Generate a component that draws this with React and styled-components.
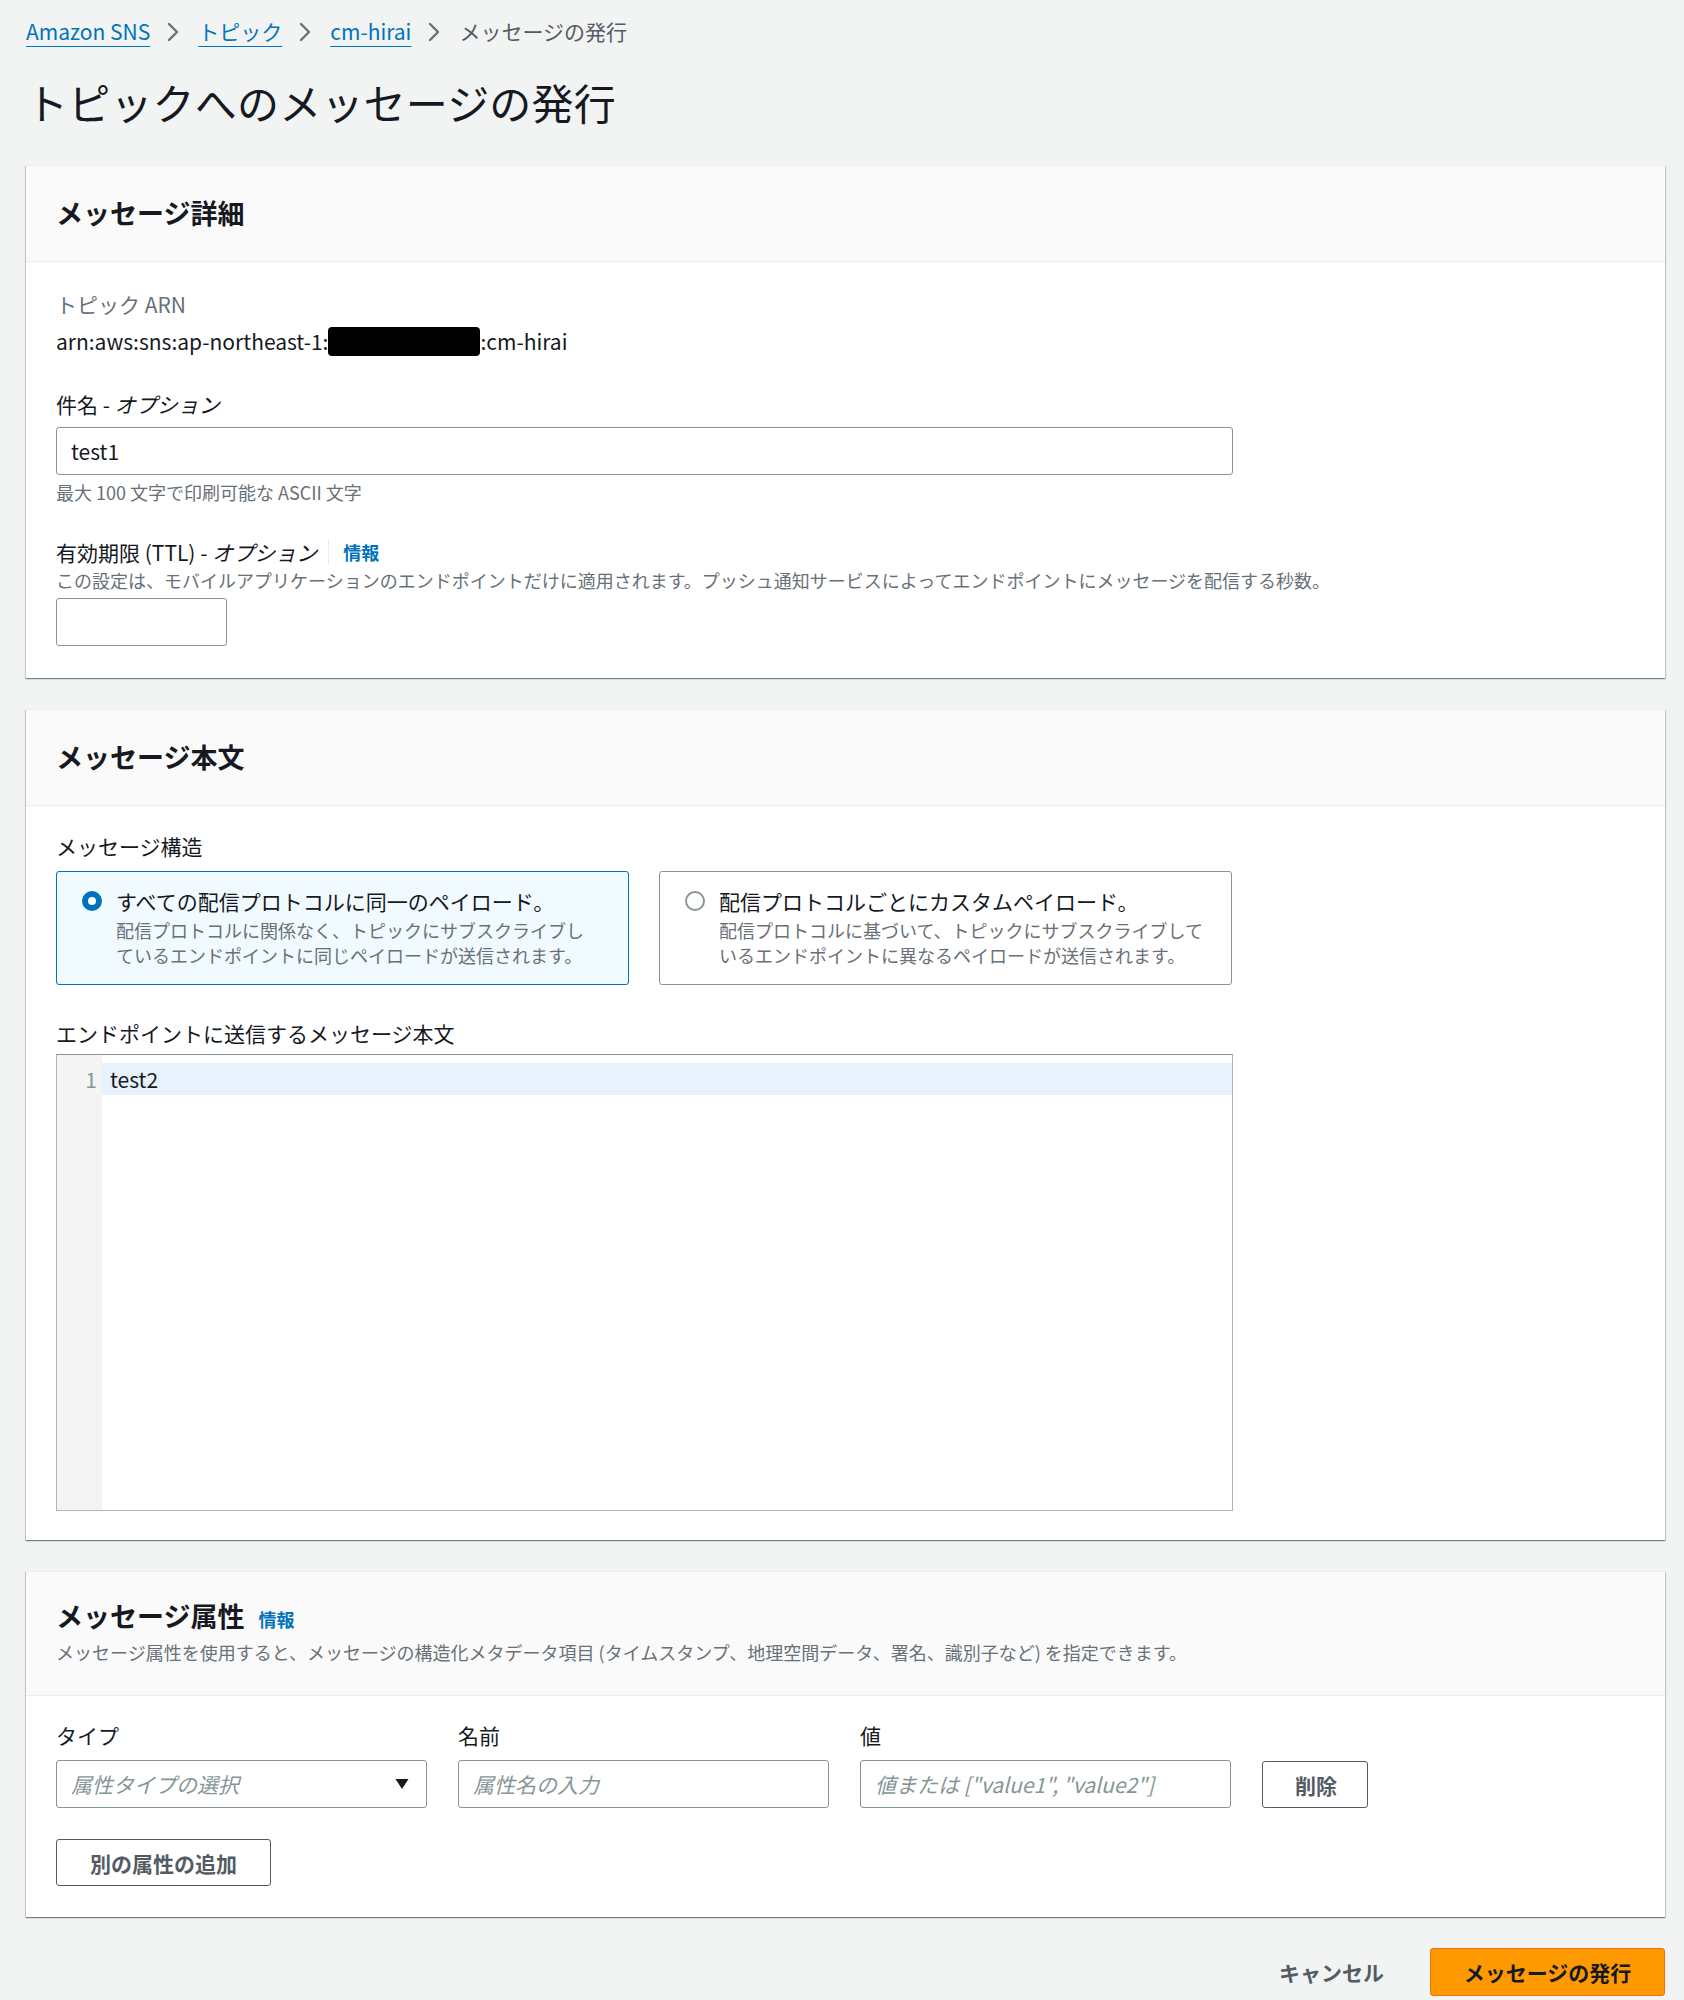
import React from 'react';
import styled, { createGlobalStyle } from 'styled-components';

const GlobalStyle = createGlobalStyle`
  html, body { margin: 0; padding: 0; background: #f2f3f3; }
  body {
    font-family: "Noto Sans CJK JP", "Noto Sans", sans-serif;
    color: #16191f;
    -webkit-font-smoothing: antialiased;
  }
  * { box-sizing: border-box; }
`;

const Page = styled.div`
  padding: 15px 19px 0 26px;
  min-height: 2000px;
`;

const Crumbs = styled.nav`
  display: flex;
  align-items: center;
  height: 33px;
  font-size: 21px;
  line-height: 33px;
`;

const CrumbLink = styled.a`
  color: #0073bb;
  text-decoration: underline;
  text-decoration-thickness: 1px;
  text-underline-offset: 6px;
  cursor: pointer;
`;

const CrumbCurrent = styled.span`
  color: #545b64;
`;

const CrumbSep = styled.svg`
  width: 12px;
  height: 20px;
  margin: 0 19px 0 17px;
  flex: none;
`;

const Title = styled.h1`
  margin: 29px 0 38px;
  font-size: 42px;
  line-height: 50px;
  font-weight: 400;
  color: #16191f;
  letter-spacing: 0.2px;
`;

const Card = styled.section`
  background: #fff;
  border-top: 1px solid #eaeded;
  box-shadow: 0 1px 1px 0 rgba(0, 28, 36, 0.35), 1px 1px 1px 0 rgba(0, 28, 36, 0.15),
    -1px 1px 1px 0 rgba(0, 28, 36, 0.15);
  margin-bottom: 31px;
`;

const CardHeader = styled.header`
  background: #fafafa;
  border-bottom: 1px solid #eaeded;
  padding: ${(p) => (p.$withDesc ? '26px 30px 31px' : '29px 30px 30px')};
`;

const HeadingRow = styled.div`
  display: flex;
  align-items: baseline;
  gap: 14px;
`;

const Heading = styled.h2`
  margin: 0;
  font-size: 27px;
  line-height: 36px;
  font-weight: 700;
`;

const HeaderDesc = styled.p`
  margin: 6px 0 0;
  font-size: 18px;
  line-height: 24px;
  color: #687078;
`;

const CardBody = styled.div`
  padding: ${(p) => p.$pad || '26px 30px 31px'};
`;

const Stack = styled.div`
  display: flex;
  flex-direction: column;
  gap: ${(p) => p.$gap || 33}px;
`;

const Field = styled.div`
  display: flex;
  flex-direction: column;
  align-items: flex-start;
`;

const Label = styled.div`
  display: flex;
  align-items: center;
  font-size: 21px;
  line-height: 30px;
  color: ${(p) => (p.$muted ? '#687078' : '#16191f')};
  margin-bottom: ${(p) => p.$mb ?? 8}px;
  em { font-style: italic; }
`;

const InfoLink = styled.a`
  color: #0073bb;
  font-weight: 700;
  font-size: 18px;
  cursor: pointer;
`;

const Divider = styled.span`
  display: inline-block;
  width: 1px;
  height: 26px;
  background: #eaeded;
  margin: 0 14px 0 11px;
`;

const Value = styled.div`
  font-size: 21px;
  line-height: 30px;
  display: flex;
  align-items: center;
`;

const Redacted = styled.span`
  display: inline-block;
  width: 152px;
  height: 29px;
  background: #000;
  border-radius: 4px;
`;

const Hint = styled.div`
  font-size: 18px;
  line-height: 24px;
  color: #687078;
  white-space: nowrap;
  margin: ${(p) => p.$m || '0'};
`;

const TextInput = styled.input`
  display: block;
  width: ${(p) => p.$w || '100%'};
  height: 48px;
  border: 1px solid #879596;
  border-radius: 3px;
  padding: 0 14px;
  font-family: inherit;
  font-size: 21px;
  color: #16191f;
  background: #fff;
  outline: none;
  &::placeholder {
    color: #879596;
    font-style: italic;
  }
`;

const Tiles = styled.div`
  display: grid;
  grid-template-columns: 573px 573px;
  column-gap: 30px;
`;

const Tile = styled.label`
  display: flex;
  align-items: flex-start;
  gap: 14px;
  height: 114px;
  padding: 14px 20px 0 25px;
  border: 1px solid ${(p) => (p.$checked ? '#0073bb' : '#879596')};
  border-radius: 3px;
  background: ${(p) => (p.$checked ? '#f1faff' : '#fff')};
`;

const RadioDot = styled.span`
  flex: none;
  width: 20px;
  height: 20px;
  margin-top: 5px;
  border-radius: 50%;
  background: #fff;
  border: ${(p) => (p.$checked ? '6px solid #0073bb' : '2px solid #879596')};
`;

const TileText = styled.div`
  display: flex;
  flex-direction: column;
`;

const TileTitle = styled.div`
  font-size: 21px;
  line-height: 30px;
  margin-bottom: 2px;
`;

const TileDesc = styled.div`
  font-size: 18px;
  line-height: 25px;
  color: #687078;
`;

const Editor = styled.div`
  display: flex;
  width: 1177px;
  height: 457px;
  border: 1px solid #aab7b8;
  border-top-color: #879596;
  background: #fff;
`;

const Gutter = styled.div`
  width: 45px;
  flex: none;
  background: #f4f4f4;
  padding-top: 8px;
  text-align: right;
  padding-right: 5px;
  font-size: 21px;
  line-height: 32px;
  color: #879596;
`;

const Lines = styled.div`
  flex: 1;
  padding-top: 8px;
`;

const ActiveLine = styled.div`
  height: 32px;
  line-height: 32px;
  background: #e8f2fd;
  padding-left: 8px;
  font-size: 21px;
  color: #16191f;
`;

const AttrGrid = styled.div`
  display: grid;
  grid-template-columns: 371px 371px 371px 106px;
  column-gap: 31px;
  align-items: end;
`;

const SelectBox = styled.div`
  display: flex;
  align-items: center;
  justify-content: space-between;
  width: 100%;
  height: 48px;
  border: 1px solid #879596;
  border-radius: 3px;
  padding: 0 17px 0 14px;
  font-size: 21px;
  font-style: italic;
  color: #879596;
  background: #fff;
`;

const Button = styled.button`
  height: ${(p) => p.$h || 47}px;
  padding: 0 ${(p) => p.$px || 32}px;
  font-family: inherit;
  font-size: 21px;
  font-weight: 700;
  color: #545b64;
  background: #fff;
  border: 1px solid #545b64;
  border-radius: 3px;
  cursor: pointer;
  white-space: nowrap;
`;

const Actions = styled.div`
  display: flex;
  justify-content: flex-end;
  align-items: center;
  gap: 26px;
`;

const LinkButton = styled.button`
  height: 48px;
  padding: 0 20px;
  border: none;
  background: transparent;
  font-family: inherit;
  font-size: 21px;
  font-weight: 700;
  color: #545b64;
  cursor: pointer;
`;

const PrimaryButton = styled.button`
  height: 48px;
  width: 235px;
  border: 1px solid #ec7211;
  border-radius: 3px;
  background: #ff9900;
  font-family: inherit;
  font-size: 21px;
  font-weight: 700;
  color: #16191f;
  cursor: pointer;
`;

const Chevron = () => (
  <CrumbSep viewBox="0 0 12 20">
    <path d="M2 2 L10 10 L2 18" fill="none" stroke="#687078" strokeWidth="2.4" strokeLinecap="round" strokeLinejoin="round" />
  </CrumbSep>
);

const Caret = () => (
  <svg width="14" height="12" viewBox="0 0 14 12">
    <path d="M0.5 1 L13.5 1 L7 11 Z" fill="#16191f" />
  </svg>
);

export default function App() {
  return (
    <>
      <GlobalStyle />
      <Page>
        <Crumbs>
          <CrumbLink>Amazon SNS</CrumbLink>
          <Chevron />
          <CrumbLink>トピック</CrumbLink>
          <Chevron />
          <CrumbLink>cm-hirai</CrumbLink>
          <Chevron />
          <CrumbCurrent>メッセージの発行</CrumbCurrent>
        </Crumbs>

        <Title>トピックへのメッセージの発行</Title>

        <Card>
          <CardHeader>
            <Heading>メッセージ詳細</Heading>
          </CardHeader>
          <CardBody $pad="27px 30px 32px">
            <Stack $gap={33}>
              <Field>
                <Label $muted $mb={7}>トピック ARN</Label>
                <Value>
                  arn:aws:sns:ap-northeast-1:<Redacted />:cm-hirai
                </Value>
              </Field>
              <Field>
                <Label>
                  件名 -&nbsp;<em>オプション</em>
                </Label>
                <TextInput $w="1177px" defaultValue="test1" />
                <Hint $m="5px 0 0">最大 100 文字で印刷可能な ASCII 文字</Hint>
              </Field>
              <Field>
                <Label $mb={1}>
                  有効期限 (TTL) -&nbsp;<em>オプション</em>
                  <Divider />
                  <InfoLink>情報</InfoLink>
                </Label>
                <Hint $m="0 0 6px">
                  この設定は、モバイルアプリケーションのエンドポイントだけに適用されます。プッシュ通知サービスによってエンドポイントにメッセージを配信する秒数。
                </Hint>
                <TextInput $w="171px" />
              </Field>
            </Stack>
          </CardBody>
        </Card>

        <Card>
          <CardHeader>
            <Heading>メッセージ本文</Heading>
          </CardHeader>
          <CardBody $pad="25px 30px 29px">
            <Stack $gap={33}>
              <Field>
                <Label $mb={10}>メッセージ構造</Label>
                <Tiles>
                  <Tile $checked>
                    <RadioDot $checked />
                    <TileText>
                      <TileTitle>すべての配信プロトコルに同一のペイロード。</TileTitle>
                      <TileDesc>
                        配信プロトコルに関係なく、トピックにサブスクライブし
                        <br />
                        ているエンドポイントに同じペイロードが送信されます。
                      </TileDesc>
                    </TileText>
                  </Tile>
                  <Tile>
                    <RadioDot />
                    <TileText>
                      <TileTitle>配信プロトコルごとにカスタムペイロード。</TileTitle>
                      <TileDesc>
                        配信プロトコルに基づいて、トピックにサブスクライブして
                        <br />
                        いるエンドポイントに異なるペイロードが送信されます。
                      </TileDesc>
                    </TileText>
                  </Tile>
                </Tiles>
              </Field>
              <Field>
                <Label $mb={6}>エンドポイントに送信するメッセージ本文</Label>
                <Editor>
                  <Gutter>1</Gutter>
                  <Lines>
                    <ActiveLine>test2</ActiveLine>
                  </Lines>
                </Editor>
              </Field>
            </Stack>
          </CardBody>
        </Card>

        <Card>
          <CardHeader $withDesc>
            <HeadingRow>
              <Heading>メッセージ属性</Heading>
              <InfoLink>情報</InfoLink>
            </HeadingRow>
            <HeaderDesc>
              メッセージ属性を使用すると、メッセージの構造化メタデータ項目 (タイムスタンプ、地理空間データ、署名、識別子など) を指定できます。
            </HeaderDesc>
          </CardHeader>
          <CardBody $pad="24px 30px 31px">
            <Stack $gap={31}>
              <AttrGrid>
                <Field>
                  <Label $mb={10}>タイプ</Label>
                  <SelectBox>
                    <span>属性タイプの選択</span>
                    <Caret />
                  </SelectBox>
                </Field>
                <Field>
                  <Label $mb={10}>名前</Label>
                  <TextInput placeholder="属性名の入力" />
                </Field>
                <Field>
                  <Label $mb={10}>値</Label>
                  <TextInput placeholder='値または ["value1", "value2"]' />
                </Field>
                <Button $h={47} $px={0}>削除</Button>
              </AttrGrid>
              <div>
                <Button $h={47} $px={33}>別の属性の追加</Button>
              </div>
            </Stack>
          </CardBody>
        </Card>

        <Actions>
          <LinkButton>キャンセル</LinkButton>
          <PrimaryButton>メッセージの発行</PrimaryButton>
        </Actions>
      </Page>
    </>
  );
}
